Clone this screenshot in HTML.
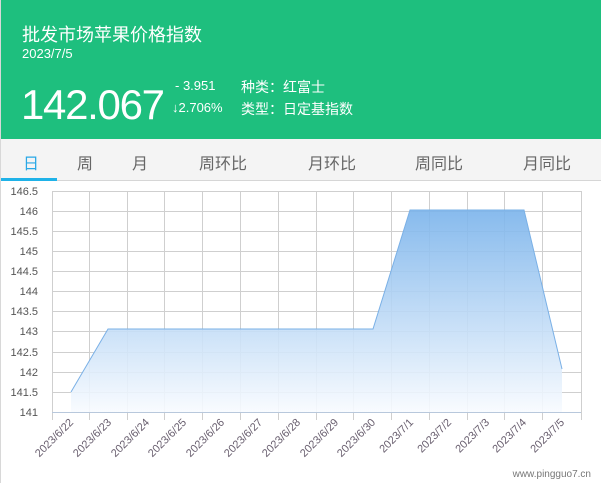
<!DOCTYPE html>
<html><head><meta charset="utf-8"><style>
*{margin:0;padding:0;box-sizing:border-box}
body{width:601px;height:483px;overflow:hidden;background:#fff;font-family:"Liberation Sans","Noto Sans CJK SC",sans-serif;position:relative}
.frame{position:absolute;left:0;top:0;width:1px;height:483px;background:#d8d8d8}
.hd{position:absolute;left:1px;top:0;width:600px;height:139px;background:#1ebf7e;color:#fff}
.t{position:absolute;left:21px;top:21px;font-size:18px}
.d{position:absolute;left:21px;top:46px;font-size:13px}
.big{position:absolute;left:20px;top:81px;font-size:42px;letter-spacing:-1.3px}
.s{position:absolute;font-size:13px}
.k{position:absolute;font-size:14px}
.tabs{position:absolute;left:1px;top:139px;width:600px;height:42px;background:#f4f4f4;border-bottom:1px solid #d6d6d6}
.tab{position:absolute;top:11px;font-size:16px;color:#666}
.ul{position:absolute;left:1px;top:178px;width:56px;height:3px;background:#1fb2e8}
</style></head><body>
<div class="frame"></div>
<div class="hd">
<div class="t">批发市场苹果价格指数</div>
<div class="d">2023/7/5</div>
<div class="big">142.067</div>
<div class="s" style="left:174px;top:78px">- 3.951</div>
<div class="s" style="left:171px;top:100px">↓2.706%</div>
<div class="k" style="left:240px;top:77px">种类：红富士</div>
<div class="k" style="left:240px;top:99px">类型：日定基指数</div>
</div>
<div class="tabs">
<div class="tab" style="left:22px;color:#29a8e6">日</div>
<div class="tab" style="left:76px">周</div>
<div class="tab" style="left:131px">月</div>
<div class="tab" style="left:198px">周环比</div>
<div class="tab" style="left:307px">月环比</div>
<div class="tab" style="left:414px">周同比</div>
<div class="tab" style="left:522px">月同比</div>
</div>
<div class="ul"></div>
<svg style="position:absolute;left:0;top:0" width="601" height="483">
<defs><linearGradient id="g" x1="0" y1="210" x2="0" y2="412" gradientUnits="userSpaceOnUse">
<stop offset="0" stop-color="#7ab3eb"/><stop offset="1" stop-color="#f8fbff"/></linearGradient></defs>
<g stroke="#cfcfcf" stroke-width="1">
<line x1="52" y1="191.5" x2="581" y2="191.5"/><line x1="52" y1="211.5" x2="581" y2="211.5"/>
<line x1="52" y1="231.5" x2="581" y2="231.5"/><line x1="52" y1="251.5" x2="581" y2="251.5"/>
<line x1="52" y1="271.5" x2="581" y2="271.5"/><line x1="52" y1="291.5" x2="581" y2="291.5"/>
<line x1="52" y1="311.5" x2="581" y2="311.5"/><line x1="52" y1="331.5" x2="581" y2="331.5"/>
<line x1="52" y1="352.5" x2="581" y2="352.5"/><line x1="52" y1="372.5" x2="581" y2="372.5"/>
<line x1="52" y1="392.5" x2="581" y2="392.5"/>
<line x1="52.5" y1="191" x2="52.5" y2="420"/><line x1="89.5" y1="191" x2="89.5" y2="420"/>
<line x1="127.5" y1="191" x2="127.5" y2="420"/><line x1="164.5" y1="191" x2="164.5" y2="420"/>
<line x1="202.5" y1="191" x2="202.5" y2="420"/><line x1="240.5" y1="191" x2="240.5" y2="420"/>
<line x1="278.5" y1="191" x2="278.5" y2="420"/><line x1="316.5" y1="191" x2="316.5" y2="420"/>
<line x1="353.5" y1="191" x2="353.5" y2="420"/><line x1="391.5" y1="191" x2="391.5" y2="420"/>
<line x1="429.5" y1="191" x2="429.5" y2="420"/><line x1="467.5" y1="191" x2="467.5" y2="420"/>
<line x1="504.5" y1="191" x2="504.5" y2="420"/><line x1="542.5" y1="191" x2="542.5" y2="420"/>
<line x1="581.5" y1="191" x2="581.5" y2="420"/>
</g>
<line x1="52" y1="412.5" x2="581" y2="412.5" stroke="#b8c8dc"/>
<path d="M71,392 L108,329 L373,329 L410,210 L524,210 L562,369 L562,412 L71,412Z" fill="url(#g)" opacity="0.9"/>
<path d="M71,392 L108,329 L373,329 L410,210 L524,210 L562,369" fill="none" stroke="#7ab0e6" stroke-width="1"/>
<g font-size="11" fill="#555" text-anchor="end">
<text x="38" y="195">146.5</text><text x="38" y="215">146</text><text x="38" y="235">145.5</text>
<text x="38" y="255">145</text><text x="38" y="275">144.5</text><text x="38" y="295">144</text>
<text x="38" y="315">143.5</text><text x="38" y="335">143</text><text x="38" y="356">142.5</text>
<text x="38" y="376">142</text><text x="38" y="396">141.5</text><text x="38" y="416">141</text>
</g>
<g font-size="11" fill="#6a6070" text-anchor="end">
<text transform="translate(74,423) rotate(-45)">2023/6/22</text>
<text transform="translate(112,423) rotate(-45)">2023/6/23</text>
<text transform="translate(150,423) rotate(-45)">2023/6/24</text>
<text transform="translate(187,423) rotate(-45)">2023/6/25</text>
<text transform="translate(225,423) rotate(-45)">2023/6/26</text>
<text transform="translate(263,423) rotate(-45)">2023/6/27</text>
<text transform="translate(301,423) rotate(-45)">2023/6/28</text>
<text transform="translate(339,423) rotate(-45)">2023/6/29</text>
<text transform="translate(376,423) rotate(-45)">2023/6/30</text>
<text transform="translate(414,423) rotate(-45)">2023/7/1</text>
<text transform="translate(452,423) rotate(-45)">2023/7/2</text>
<text transform="translate(490,423) rotate(-45)">2023/7/3</text>
<text transform="translate(527,423) rotate(-45)">2023/7/4</text>
<text transform="translate(565,423) rotate(-45)">2023/7/5</text>
</g>
<text x="591" y="477" font-size="10" fill="#777" text-anchor="end">www.pingguo7.cn</text>
</svg>
</body></html>
